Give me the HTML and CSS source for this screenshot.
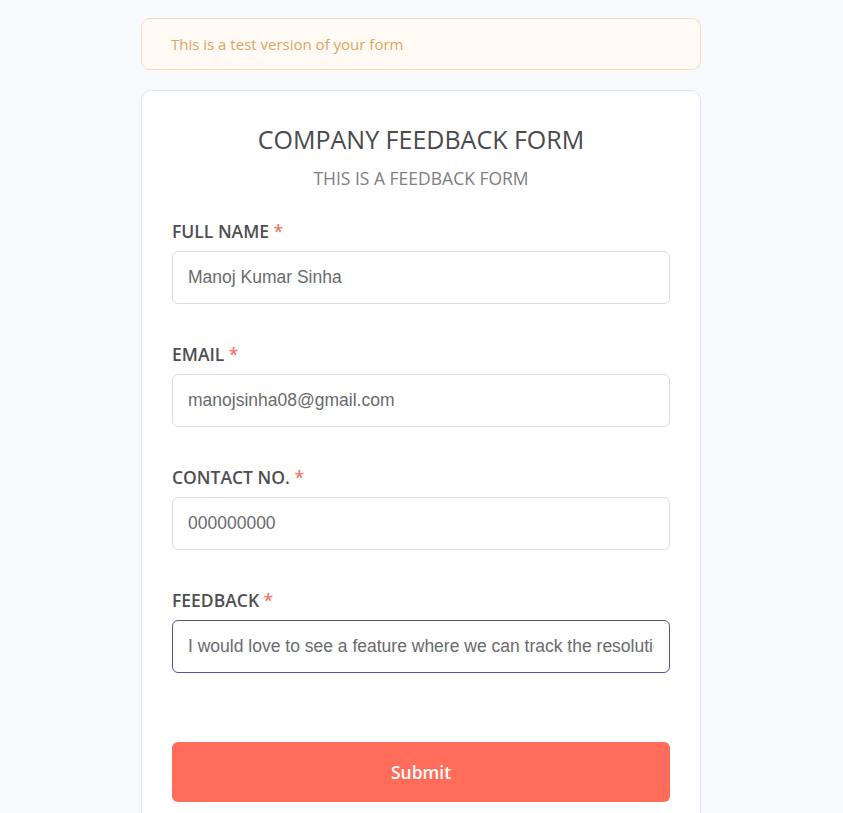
FILE: index.html
```html
<!DOCTYPE html>
<html lang="en">
<head>
<meta charset="utf-8">
<title>Company Feedback Form</title>
<link rel="stylesheet" href="styles.css">
</head>
<body>
<main class="page">
  <div class="notice">This is a test version of your form</div>
  <form class="card">
    <header class="card-head">
      <h1 class="title">COMPANY FEEDBACK FORM</h1>
      <p class="subtitle">THIS IS A FEEDBACK FORM</p>
    </header>
    <div class="field">
      <label class="label">FULL NAME <span class="req">*</span></label>
      <input class="input" type="text" value="Manoj Kumar Sinha">
    </div>
    <div class="field">
      <label class="label">EMAIL <span class="req">*</span></label>
      <input class="input" type="text" value="manojsinha08@gmail.com">
    </div>
    <div class="field">
      <label class="label">CONTACT NO. <span class="req">*</span></label>
      <input class="input" type="text" value="000000000">
    </div>
    <div class="field">
      <label class="label">FEEDBACK <span class="req">*</span></label>
      <input class="input input-focus" type="text" value="I would love to see a feature where we can track the resolution of our feedback">
    </div>
    <button class="submit" type="button">Submit</button>
  </form>
</main>
</body>
</html>
```

FILE: styles.css
```css
html, body {
  margin: 0;
  padding: 0;
  overflow: hidden;
}
body {
  background: #f8f9fd;
  font-family: "Open Sans", "Noto Sans", sans-serif;
  padding-right: 1px;
}
.page {
  width: 560px;
  margin: 0 auto;
  padding-top: 18px;
  display: flex;
  flex-direction: column;
  gap: 20px;
}
.notice {
  box-sizing: border-box;
  height: 52px;
  display: flex;
  align-items: center;
  padding: 0 29px;
  background: #fffaf4;
  border: 1px solid #f1dcbc;
  border-radius: 9px;
  color: #dea462;
  font-size: 15px;
}
.card {
  box-sizing: border-box;
  background: #ffffff;
  border: 1px solid #e1e3ec;
  border-radius: 10px;
  padding: 32px 30px 40px;
  display: flex;
  flex-direction: column;
}
.card-head {
  text-align: center;
  margin-bottom: 27px;
}
.title {
  margin: 0;
  font-size: 25px;
  line-height: 32px;
  font-weight: 400;
  color: #4a4a4d;
}
.subtitle {
  margin: 10px 0 0;
  font-size: 17.5px;
  line-height: 26px;
  color: #7e7e83;
}
.field {
  display: flex;
  flex-direction: column;
  gap: 7px;
  margin-bottom: 37px;
}
.label {
  font-size: 17.5px;
  line-height: 26px;
  font-weight: 600;
  color: #4f4f52;
}
.req {
  color: #f2776a;
}
.input {
  box-sizing: border-box;
  height: 53px;
  width: 100%;
  padding: 0 15px;
  border: 1px solid #dcdcdf;
  border-radius: 6px;
  font-family: "Liberation Sans", Arial, sans-serif;
  font-size: 17.5px;
  color: #6a6a6e;
  background: #ffffff;
  outline: none;
}
.input-focus {
  border-color: #5d4f9e;
}
.submit {
  margin-top: 32px;
  height: 60px;
  border: none;
  border-radius: 6px;
  background: #ff6c5a;
  color: #ffffff;
  font-family: "Open Sans", "Noto Sans", sans-serif;
  font-size: 17.5px;
  font-weight: 600;
}
```
